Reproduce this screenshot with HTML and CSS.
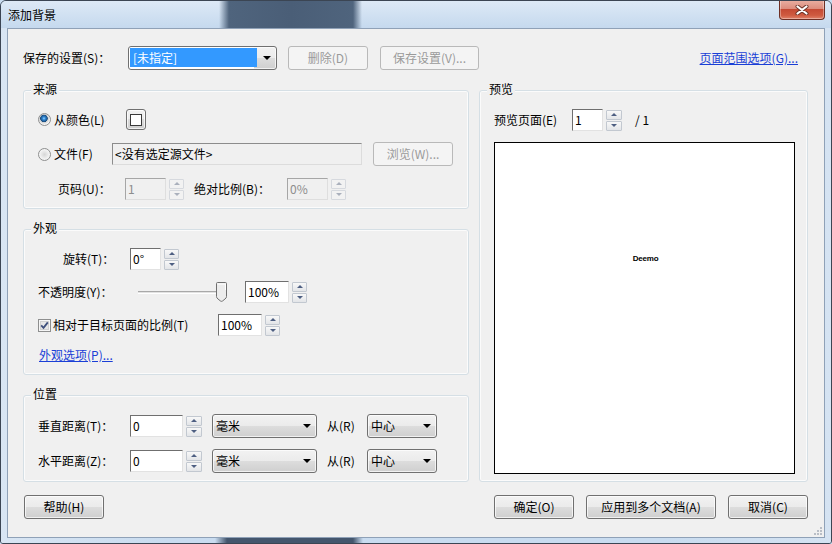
FILE: index.html
```html
<!DOCTYPE html>
<html lang="zh-CN">
<head>
  <meta charset="UTF-8" />
  <title>添加背景</title>
  <link rel="stylesheet" href="styles.css">
</head>
<body>

  <div class="window">

    <!-- Title bar -->
    <div class="titlebar">
      <span class="title">添加背景</span>
      <button class="close-btn" title="关闭">
        <svg width="14" height="10" viewBox="0 0 14 10">
          <path d="M2.5 1.5 L11.5 8.5 M11.5 1.5 L2.5 8.5" stroke="#6b3328" stroke-width="4" stroke-linecap="round" fill="none"/>
          <path d="M2.5 1.5 L11.5 8.5 M11.5 1.5 L2.5 8.5" stroke="#fff" stroke-width="2.2" stroke-linecap="round" fill="none"/>
        </svg>
      </button>
    </div>

    <div class="frame">
      <div class="client">

        <!-- Saved settings -->
        <div class="top-row">
          <span class="lbl saved-lbl">保存的设置(S)：</span>
          <div class="combo combo-saved"><span class="sel">[未指定]</span><span class="arrow"></span></div>
          <button class="btn btn-del" disabled>删除(D)</button>
          <button class="btn btn-save" disabled>保存设置(V)...</button>
          <a href="#" class="link range-link">页面范围选项(G)...</a>
        </div>

        <div class="main">
          <div class="left-col">

            <!-- Source -->
            <div class="group g-source">
              <span class="group-title">来源</span>
              <div class="row r-color">
                <label class="opt opt-color"><span class="radio on"></span>从颜色(L)</label>
                <button class="btn swatch"><span></span></button>
              </div>
              <div class="row r-file">
                <label class="opt opt-file"><span class="radio"></span>文件(F)</label>
                <div class="field path">&lt;没有选定源文件&gt;</div>
                <button class="btn browse" disabled>浏览(W)...</button>
              </div>
              <div class="row r-page">
                <span class="lbl page-lbl">页码(U)：</span>
                <div class="field off w41">1</div>
                <div class="spin off"><i class="up"></i><i class="dn"></i></div>
                <span class="lbl abs-lbl">绝对比例(B)：</span>
                <div class="field off w41">0%</div>
                <div class="spin off"><i class="up"></i><i class="dn"></i></div>
              </div>
            </div>

            <!-- Appearance -->
            <div class="group g-look">
              <span class="group-title">外观</span>
              <div class="row r-rotate">
                <span class="lbl rotate-lbl">旋转(T)：</span>
                <div class="field w31">0°</div>
                <div class="spin"><i class="up"></i><i class="dn"></i></div>
              </div>
              <div class="row r-opacity">
                <span class="lbl opacity-lbl">不透明度(Y)：</span>
                <div class="slider">
                  <span class="track"></span>
                  <svg class="thumb" width="11" height="20" viewBox="0 0 11 20">
                    <path d="M.5 1.5 Q.5 .5 1.5 .5 H9.5 Q10.5 .5 10.5 1.5 V14.5 Q10.5 16 9 17 L6.5 19 Q5.5 19.7 4.5 19 L2 17 Q.5 16 .5 14.5 Z" fill="#ececec" stroke="#707070"/>
                    <path d="M1.5 2 H9.5 V8" stroke="#fff" fill="none"/>
                  </svg>
                </div>
                <div class="field w44 opacity-field">100%</div>
                <div class="spin"><i class="up"></i><i class="dn"></i></div>
              </div>
              <div class="row r-ratio">
                <label class="opt opt-ratio">
                  <svg class="check" width="13" height="13" viewBox="0 0 13 13">
                    <rect x=".5" y=".5" width="12" height="12" fill="#f6f6f6" stroke="#8e8f8f"/>
                    <rect x="2.5" y="2.5" width="8" height="8" fill="#e6e6e6" stroke="#d0d0d0"/>
                    <path d="M3.2 6.4 L5.5 8.8 L9.8 3.4" stroke="#3e4f7c" stroke-width="1.8" fill="none"/>
                  </svg>相对于目标页面的比例(T)
                </label>
                <div class="field w44">100%</div>
                <div class="spin"><i class="up"></i><i class="dn"></i></div>
              </div>
              <div class="row r-link">
                <a href="#" class="link">外观选项(P)...</a>
              </div>
            </div>

            <!-- Position -->
            <div class="group g-pos">
              <span class="group-title">位置</span>
              <div class="row r-vert">
                <span class="lbl dist-lbl">垂直距离(T)：</span>
                <div class="field w53">0</div>
                <div class="spin"><i class="up"></i><i class="dn"></i></div>
                <div class="combo combo-unit"><span class="val">毫米</span><span class="arrow"></span></div>
                <span class="lbl from-lbl">从(R)</span>
                <div class="combo combo-from"><span class="val">中心</span><span class="arrow"></span></div>
              </div>
              <div class="row r-horz">
                <span class="lbl dist-lbl">水平距离(Z)：</span>
                <div class="field w53">0</div>
                <div class="spin"><i class="up"></i><i class="dn"></i></div>
                <div class="combo combo-unit"><span class="val">毫米</span><span class="arrow"></span></div>
                <span class="lbl from-lbl">从(R)</span>
                <div class="combo combo-from"><span class="val">中心</span><span class="arrow"></span></div>
              </div>
            </div>

          </div>

          <!-- Preview -->
          <div class="group g-preview">
            <span class="group-title">预览</span>
            <div class="row r-page-preview">
              <span class="lbl preview-lbl">预览页面(E)</span>
              <div class="field w31">1</div>
              <div class="spin"><i class="up"></i><i class="dn"></i></div>
              <span class="lbl total">/ 1</span>
            </div>
            <div class="preview-box"><span class="sample">Deemo</span></div>
          </div>
        </div>

        <!-- Buttons -->
        <div class="bottom-row">
          <button class="btn help">帮助(H)</button>
          <div class="actions">
            <button class="btn ok">确定(O)</button>
            <button class="btn apply-many">应用到多个文档(A)</button>
            <button class="btn cancel">取消(C)</button>
          </div>
        </div>

        <svg class="grip" width="10" height="10" viewBox="0 0 10 10">
          <rect x="7" y="1" width="2" height="2" fill="#b9bec6"/>
          <rect x="4" y="4" width="2" height="2" fill="#b9bec6"/>
          <rect x="7" y="4" width="2" height="2" fill="#b9bec6"/>
          <rect x="1" y="7" width="2" height="2" fill="#b9bec6"/>
          <rect x="4" y="7" width="2" height="2" fill="#b9bec6"/>
          <rect x="7" y="7" width="2" height="2" fill="#b9bec6"/>
        </svg>
      </div>
    </div>
  </div>

</body>
</html>
```

FILE: styles.css
```css
* { box-sizing: border-box; margin: 0; padding: 0; }
body { font-family: "Noto Sans CJK SC", "Noto Sans", sans-serif; font-size: 12px; line-height: 14px; color: #000; width: 832px; height: 544px; overflow: hidden; background: #c9dcf0; }

/* window frame */
.window { width: 832px; height: 544px; border: 1px solid #3b4553; border-radius: 6px 6px 3px 3px; overflow: hidden; display: flex; flex-direction: column; background: #c8dbef; }
.titlebar { height: 27px; display: flex; align-items: center; padding-left: 7px;
  background: linear-gradient(90deg, rgba(74,94,119,0) 218px, #4f647d 228px, #4a5e77 290px, #4f647d 352px, rgba(74,94,119,0) 361px), linear-gradient(#dde9f6, #c5d9ee); }
.title { flex: 1; align-self: center; padding-top: 1px; }
.close-btn { align-self: flex-start; margin: -1px 6px 0 0; width: 46px; height: 20px; border: 1px solid #6e2f24; border-top: 0; border-radius: 0 0 4px 4px; display: flex; align-items: center; justify-content: center;
  background: linear-gradient(#eab0a3 0%, #dc8d7d 45%, #c54a34 50%, #cf5a40 80%, #e0826a 100%); box-shadow: inset 0 0 0 1px rgba(255,255,255,.35); }
.frame { flex: 1; display: flex; padding: 0 6px 5px;
  background: linear-gradient(90deg, rgba(70,90,115,0) 214px, #44566d 226px, #44566d 352px, rgba(70,90,115,0) 362px) bottom / 100% 6px no-repeat, linear-gradient(90deg, #d8e5f3, #c9dcf0 20%, #c9dcf0 80%, #d5e3f2); }
.client { flex: 1; position: relative; display: flex; flex-direction: column; background: #f0f0f0; border: 1px solid #8fa1b7; padding: 17px 16px 0 15px; }
.grip { position: absolute; right: 1px; bottom: 1px; }

/* common controls */
.lbl { display: flex; align-items: center; flex-shrink: 0; white-space: nowrap; }
.link { color: #1a3fd6; text-decoration: underline; white-space: nowrap; }
.btn { font: inherit; color: #000; height: 24px; display: flex; align-items: center; justify-content: center; flex-shrink: 0; border: 1px solid #707070; border-radius: 3px;
  background: linear-gradient(#f2f2f2 0%, #ebebeb 50%, #dddddd 50%, #cfcfcf 100%); box-shadow: inset 0 0 0 1px rgba(255,255,255,.7); }
.btn:disabled { color: #9a9a9a; border-color: #b9b9b9; background: #f4f4f4; box-shadow: none; }
.field { height: 22px; flex-shrink: 0; display: flex; align-items: center; padding: 0 2px; background: #fff; border: 1px solid; border-color: #6f6f6f #e2e2e2 #e2e2e2 #6f6f6f; white-space: nowrap; }
.field.off { background: #f0f0f0; color: #8d8d8d; border-color: #a6a6a6 #dedede #dedede #a6a6a6; }
.w31 { width: 31px; }
.w41 { width: 41px; }
.w44 { width: 44px; }
.w53 { width: 53px; }
.spin { width: 15px; height: 21px; margin-left: 3px; flex-shrink: 0; display: flex; flex-direction: column; justify-content: space-between; }
.spin i { height: 10px; display: flex; align-items: center; justify-content: center; border: 1px solid #c2c8d0; border-radius: 1px; background: linear-gradient(#f8f8f8, #e3e5e8); }
.spin i::before { content: ""; border-left: 3px solid transparent; border-right: 3px solid transparent; }
.spin i.up::before { border-bottom: 3px solid #4e5f82; }
.spin i.dn::before { border-top: 3px solid #4e5f82; }
.spin.off i { border-color: #d6d9de; background: #f2f2f2; }
.spin.off i.up::before { border-bottom-color: #aab0bc; }
.spin.off i.dn::before { border-top-color: #aab0bc; }
.combo { height: 24px; flex-shrink: 0; display: flex; align-items: center; padding-left: 3px; border: 1px solid #707070; border-radius: 3px;
  background: linear-gradient(#f2f2f2 0%, #ebebeb 50%, #dddddd 50%, #cfcfcf 100%); box-shadow: inset 0 0 0 1px rgba(255,255,255,.7); }
.combo .val { flex: 1; }
.combo .arrow { width: 19px; display: flex; justify-content: center; }
.combo .arrow::before { content: ""; border-left: 4px solid transparent; border-right: 4px solid transparent; border-top: 4px solid #000; }
.radio { width: 13px; height: 13px; border-radius: 50%; border: 1px solid #8e8f8f; margin-right: 3px; flex-shrink: 0; background: radial-gradient(circle at 50% 50%, #d6d6d6 0, #e8e8e8 3px, #fafafa 6px); }
.radio.on { background: radial-gradient(circle at 45% 40%, #9ad6ff 0, #2f86d4 1.5px, #1a4b7c 3.5px, #cfcfcf 4px, #f6f6f6 6px); }
.opt { display: flex; align-items: center; flex-shrink: 0; white-space: nowrap; }
.check { margin-right: 2px; flex-shrink: 0; }

/* top row */
.top-row { height: 24px; display: flex; align-items: center; }
.saved-lbl { width: 105px; }
.combo-saved { width: 149px; padding: 1px 0 2px 1px; align-items: stretch; background: linear-gradient(90deg, #fff 125px, transparent 125px), linear-gradient(#f2f2f2 0%, #ebebeb 50%, #dddddd 50%, #cfcfcf 100%); }
.combo-saved .sel { flex: 1; background: #3399ff; color: #fff; padding-left: 3px; display: flex; align-items: center; }
.combo-saved .arrow { align-items: center; }
.btn-del { width: 80px; margin-left: 11px; }
.btn-save { width: 99px; margin-left: 12px; }
.range-link { margin-left: auto; margin-right: 10px; }

/* groups */
.main { display: flex; gap: 10px; margin-top: 20px; }
.left-col { width: 446px; display: flex; flex-direction: column; gap: 20px; }
.group { position: relative; border: 1px solid #d5dfe5; border-radius: 3px; box-shadow: inset 0 0 0 1px #fbfbfb; padding: 18px 0 0 14px; }
.group-title { position: absolute; top: -9px; left: 7px; padding: 0 2px; background: #f0f0f0; line-height: 14px; }
.row { display: flex; align-items: center; }

.g-source { height: 119px; }
.r-color { height: 21px; }
.opt-color { width: 88px; }
.swatch { width: 20px; height: 21px; }
.swatch span { width: 12px; height: 12px; background: #fff; border: 1px solid #3a3a3a; }
.r-file { height: 24px; margin-top: 12px; }
.opt-file { width: 74px; }
.path { width: 250px; background: #f0f0f0; border-color: #8c8c8c #dcdcdc #dcdcdc #8c8c8c; }
.browse { width: 80px; margin-left: 11px; }
.r-page { height: 22px; margin-top: 12px; }
.page-lbl { width: 67px; margin-left: 20px; }
.abs-lbl { width: 93px; margin-left: 10px; }

.g-look { height: 146px; }
.r-rotate { height: 22px; }
.rotate-lbl { width: 67px; margin-left: 25px; }
.r-opacity { height: 22px; margin-top: 11px; }
.opacity-lbl { width: 100px; }
.slider { display: flex; align-items: center; height: 20px; }
.track { width: 85px; height: 3px; border-top: 1px solid #a9a9a9; border-bottom: 1px solid #fff; background: #e2e2e2; }
.thumb { margin-left: -7px; }
.opacity-field { margin-left: 18px; }
.r-ratio { height: 22px; margin-top: 11px; }
.opt-ratio { width: 180px; }
.r-link { height: 16px; margin-top: 11px; padding-left: 1px; }

.g-pos { height: 87px; }
.r-vert { height: 24px; }
.r-horz { height: 24px; margin-top: 11px; }
.dist-lbl { width: 92px; }
.r-vert .spin, .r-horz .spin { width: 16px; }
.combo-unit { width: 105px; margin-left: 10px; }
.from-lbl { width: 40px; margin-left: 10px; }
.combo-from { width: 70px; }

/* preview */
.g-preview { width: 329px; height: 392px; }
.r-page-preview { height: 22px; }
.preview-lbl { width: 78px; }
.r-page-preview .spin { width: 16px; }
.total { margin-left: 13px; }
.preview-box { margin-top: 11px; width: 301px; height: 332px; border: 1px solid #000; background: #fff; text-align: center; padding: 106px 0 0 2px; }
.sample { font-family: "Liberation Sans", Arial, sans-serif; font-weight: bold; font-size: 8px; line-height: 10px; letter-spacing: -0.2px; }

/* bottom buttons */
.bottom-row { display: flex; margin-top: 13px; height: 24px; }
.help { width: 80px; margin-left: 1px; }
.actions { margin-left: auto; display: flex; gap: 12px; }
.ok, .cancel { width: 80px; }
.apply-many { width: 130px; }
```
